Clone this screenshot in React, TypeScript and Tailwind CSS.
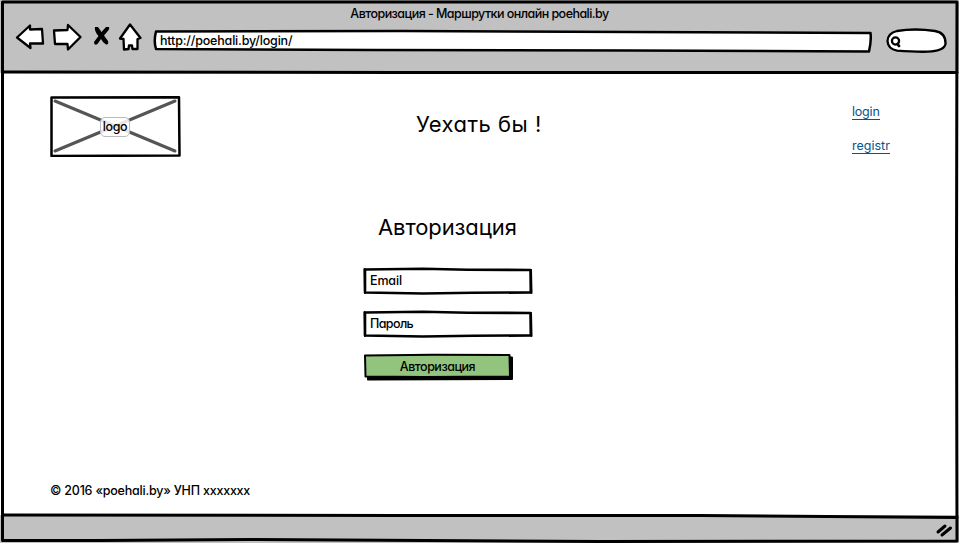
import type { ReactNode } from "react";

const ink = { stroke: "#000", strokeLinecap: "round", strokeLinejoin: "round" } as const;

function Field({ children }: { children: ReactNode }) {
  return (
    <div className="relative flex h-[28px] w-[170px] items-center pl-[7px]">
      <svg className="absolute inset-0" width="170" height="28" fill="none" {...ink}>
        <path d="M2 2.500 L60 1.800 L105 2.700 L167.500 3 L167.800 25.500 L110 25.700 L60 26.500 L2 25.500 Z" fill="#fff" strokeWidth="2.600" />
        <path d="M1.500 2 L2 26 M168 3 L168.500 26" strokeWidth="2" />
      </svg>
      <span className="relative">{children}</span>
    </div>
  );
}

function NavIcons() {
  return (
    <svg className="shrink-0" width="150" height="70" viewBox="0 0 150 70" fill="#fff" strokeWidth="2.3" {...ink}>
      <path d="M17 37.500 L30 25.500 L30 29.500 L42 29 L43 43.500 L30 43.500 L30.500 48 Z" />
      <path d="M54 30.500 L67.500 30 L68 25 L80.500 37 L68 49.500 L67.500 44 L55 44 Z" />
      <path d="M95 27 L98 27 L101.500 32 L106 27 L109 27 Q110 29 107 32 L104 35.500 L108 41 Q109 45 106 44.500 Q103 43 101 39 L97.500 44 Q94 46 94 42 L98.500 36 Q94 31 95 27 Z" stroke="none" fill="#000" />
      <path d="M130 24.500 L140.500 38 L137.500 39 L137.500 49 L132.500 49 L132 45.500 L129 45.500 L128.500 49 L124 49.500 L123.500 39 L120 38.500 Z" />
    </svg>
  );
}

export default function App() {
  return (
    <div className="relative flex h-[543px] w-[959px] flex-col overflow-hidden bg-white font-['Inter','Noto_Sans',sans-serif] text-[12.5px] leading-4 font-medium text-black [font-feature-settings:'cv11']">
      <header className="flex h-[73px] shrink-0 flex-col bg-[#c1c1c1]">
        <div className="relative flex h-0 justify-center">
          <span className="mt-[6px] tracking-[-0.54px] whitespace-nowrap">Авторизация - Маршрутки онлайн poehali.by</span>
        </div>
        <div className="flex h-[73px]">
          <NavIcons />
          <div className="relative mt-[29px] ml-[2px] flex h-[26px] w-[721px] pt-[4px] pl-[8px]">
            <svg className="absolute inset-0" width="721" height="26" fill="#fff" strokeWidth="2.500" {...ink}>
              <path d="M4 2.500 L250 2 L480 3 L718.500 4 Q719.500 12 717 22.500 L480 21.500 L220 21 L4 20 Q1.500 12 4 2.500 Z" />
            </svg>
            <span className="relative tracking-[-0.18px]">http://poehali.by/login/</span>
          </div>
          <svg className="mt-[27px] ml-[12px]" width="64" height="28" fill="#fff" strokeWidth="2.3" {...ink}>
            <path d="M12 4 Q30 1 50 4 Q61 6 60.500 17 Q59 24 43 24.700 Q30 25 12 23.700 Q3 22 2.500 14 Q3 6 12 4 Z" />
            <circle cx="10.500" cy="14" r="3.600" fill="none" />
            <path d="M12.500 17 L14 19" fill="none" strokeWidth="2.800" />
          </svg>
        </div>
      </header>

      <main className="flex flex-1 flex-col">
        <div className="flex h-[129px] items-start pt-[22px] pl-[49px]">
          <div className="relative flex h-[62px] w-[132px] items-center justify-center">
            <svg className="absolute inset-0" width="132" height="62" fill="none" {...ink}>
              <path d="M2.500 2.500 L130 2.200 L130.500 60.500 L2.500 61 Z" strokeWidth="2.500" />
              <path d="M6 6 L126 56 M6 56 L126 6" stroke="#555" strokeWidth="3" />
            </svg>
            <span className="relative mt-px flex h-[20px] w-[30px] items-center justify-center rounded-[5px] border border-[#bbb] bg-white/85 tracking-[-0.4px]">logo</span>
          </div>
          <h1 className="mt-[15px] ml-[235px] w-[200px] text-[22px] leading-7 font-normal tracking-[0.5px] whitespace-nowrap">Уехать бы !</h1>
          <nav className="mt-[9px] ml-[236px] flex flex-col items-start gap-[18px] text-[#05538d]">
            <a className="border-b border-[#05538d] leading-[15px] font-normal tracking-[-0.2px]">login</a>
            <a className="border-b border-[#05538d] leading-[15px] font-normal">registr</a>
          </nav>
        </div>

        <form className="ml-[363px] flex w-[170px] flex-col items-start">
          <h2 className="mt-[11px] ml-[15px] text-[22px] leading-7 font-normal tracking-[-0.1px]">Авторизация</h2>
          <div className="mt-[26px] flex flex-col gap-[15px]">
            <Field><span className="tracking-[-0.15px]">Email</span></Field>
            <Field><span className="tracking-[-0.6px]">Пароль</span></Field>
          </div>
          <div className="relative mt-[15px] flex h-[28px] w-[151px] items-center justify-center pr-[2px]">
            <svg className="absolute inset-0" width="151" height="28" {...ink}>
              <path d="M5 5 L149 4.500 L149 26 L5 26.500 Z" strokeWidth="2" />
              <path d="M2 2.500 L70 1.800 L146.500 2 L147 23.500 L60 24 L2.500 23.500 Z" fill="#93c47d" strokeWidth="2" />
            </svg>
            <span className="relative tracking-[-0.5px]">Авторизация</span>
          </div>
        </form>
        <p className="mt-auto mb-[16px] ml-[50px] tracking-[-0.22px]">© 2016 «poehali.by» УНП xxxxxxx</p>
      </main>

      <footer className="flex h-[28px] shrink-0 justify-end bg-[#c1c1c1]">
        <svg className="mr-[3px] mt-[5px]" width="21" height="19" fill="none" strokeWidth="3" {...ink}>
          <path d="M3 12 L10 6 M7 15 L15.500 8" />
        </svg>
      </footer>

      <svg className="pointer-events-none absolute inset-0" width="959" height="543" fill="none" strokeWidth="3" {...ink}>
        <path d="M2.500 2 L400 2 L957 2 L956.500 270 L957 541 L600 541.500 L250 539.500 L100 540.500 L2.500 540.500 L2.500 270 Z" />
        <path d="M3 72 L400 72.500 L957 72.500 M3 515 L400 515.500 L700 515.500 L957 517.500" />
      </svg>
    </div>
  );
}
